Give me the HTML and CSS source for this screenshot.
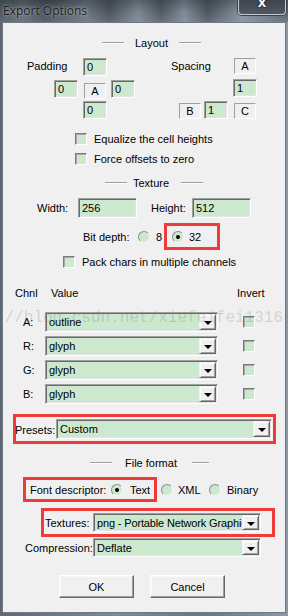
FILE: index.html
```html
<!DOCTYPE html>
<html lang="en">

<head>
    <meta charset="UTF-8">
    <meta name="viewport" content="width=device-width, initial-scale=1.0">
    <title>Export Options</title>
    <link rel="stylesheet" href="styles.css">
</head>

<body>
    <div class="window">
        <div class="titlebar">
            <span class="title">Export Options</span>
            <div class="close">X</div>
        </div>

        <div class="client">
            <!-- Layout -->
            <div class="heading heading-layout">
                <span class="rule"></span><span class="heading-text">Layout</span><span class="rule"></span>
            </div>
            <div class="layout-row">
                <div class="pad-grid">
                    <span class="grid-label">Padding</span>
                    <span class="field p-top">0</span>
                    <span class="field p-left">0</span>
                    <span class="static p-mid">A</span>
                    <span class="field p-right">0</span>
                    <span class="field p-bottom">0</span>
                </div>
                <div class="space-grid">
                    <span class="grid-label">Spacing</span>
                    <span class="static s-a">A</span>
                    <span class="field s-v">1</span>
                    <span class="static s-b">B</span>
                    <span class="field s-h">1</span>
                    <span class="static s-c">C</span>
                </div>
            </div>
            <div class="check-row row-equalize"><span class="check"></span>Equalize the cell heights</div>
            <div class="check-row row-force"><span class="check"></span>Force offsets to zero</div>

            <!-- Texture -->
            <div class="heading heading-texture">
                <span class="rule"></span><span class="heading-text">Texture</span><span class="rule"></span>
            </div>
            <div class="size-row">
                <span class="size-label">Width:</span>
                <span class="field field-wide">256</span>
                <span class="size-label">Height:</span>
                <span class="field field-wide">512</span>
            </div>
            <div class="bit-row">
                <span class="bit-label">Bit depth:</span>
                <span class="radio"></span>
                <span class="bit-eight">8</span>
                <span class="mark mark-bit">
                    <span class="radio checked"></span>
                    <span class="bit-32">32</span>
                </span>
            </div>
            <div class="check-row row-pack"><span class="check"></span>Pack chars in multiple channels</div>

            <div class="chan-head">
                <span class="chan-col">Chnl</span>
                <span class="value-col">Value</span>
                <span>Invert</span>
            </div>
            <div class="chan-row first">
                <span class="chan-label">A:</span>
                <span class="select select-chan">outline<span class="drop"></span></span>
                <span class="check"></span>
            </div>
            <div class="chan-row">
                <span class="chan-label">R:</span>
                <span class="select select-chan">glyph<span class="drop"></span></span>
                <span class="check"></span>
            </div>
            <div class="chan-row">
                <span class="chan-label">G:</span>
                <span class="select select-chan">glyph<span class="drop"></span></span>
                <span class="check"></span>
            </div>
            <div class="chan-row">
                <span class="chan-label">B:</span>
                <span class="select select-chan">glyph<span class="drop"></span></span>
                <span class="check"></span>
            </div>

            <div class="mark mark-presets">
                <span class="presets-label">Presets:</span>
                <span class="select select-presets">Custom<span class="drop"></span></span>
            </div>

            <!-- File format -->
            <div class="heading heading-file">
                <span class="rule"></span><span class="heading-text">File format</span><span class="rule rule-short"></span>
            </div>
            <div class="desc-row">
                <span class="mark mark-desc">
                    <span class="desc-label">Font descriptor:</span>
                    <span class="radio checked"></span>
                    <span class="opt-text">Text</span>
                </span>
                <span class="radio radio-xml"></span>
                <span class="opt-xml">XML</span>
                <span class="radio"></span>
                <span class="opt-bin">Binary</span>
            </div>
            <div class="mark mark-tex">
                <span class="tex-label">Textures:</span>
                <span class="select select-file select-png">png - Portable Network Graphics<span class="drop"></span></span>
            </div>
            <div class="comp-row">
                <span class="comp-label">Compression:</span>
                <span class="select select-file">Deflate<span class="drop"></span></span>
            </div>

            <div class="button-row">
                <span class="btn">OK</span>
                <span class="btn">Cancel</span>
            </div>

            <div class="watermark">://blog.csdn.net/xiefeifei1316</div>
        </div>
    </div>
</body>

</html>
```

FILE: styles.css
```css
* {
    margin: 0;
    padding: 0;
    box-sizing: border-box;
}

body {
    font-family: "Liberation Sans", Arial, sans-serif;
    font-size: 11px;
    color: #000;
    background: #6c7782;
}

.window {
    width: 288px;
    height: 616px;
    padding: 0 2px 3px 2px;
    background: linear-gradient(90deg, #5d6872 0%, #7d8994 40%, #6a7681 70%, #8c98a4 100%);
    overflow: hidden;
}

/* title bar */
.titlebar {
    position: relative;
    height: 22px;
    margin: 0 -2px;
    background:
        linear-gradient(180deg, rgba(30, 36, 42, 0.35) 0%, rgba(0, 0, 0, 0) 55%, rgba(160, 172, 184, 0.25) 100%),
        linear-gradient(90deg, #4a535c 0%, #5e6872 8%, #434b53 16%, #6a747e 30%, #4c545c 38%, #7c8792 48%, #515a63 56%, #7f8a96 64%, #4d565f 72%, #8793a0 84%, #5b6570 100%);
}

.title {
    position: absolute;
    left: 3px;
    top: 2px;
    font-family: "Open Sans", "Liberation Sans", sans-serif;
    font-size: 12px;
    color: #161a1e;
    text-shadow: 0 0 5px rgba(255, 255, 255, 0.55), 0 0 2px rgba(255, 255, 255, 0.4);
}

.close {
    position: absolute;
    left: 238px;
    top: -1px;
    width: 48px;
    height: 16px;
    border: 1px solid #c4cad0;
    border-top: none;
    border-radius: 0 0 4px 4px;
    background: linear-gradient(180deg, #3b434b, #505963);
    box-shadow: 0 0 0 1px #3a4148;
    color: #fff;
    font-family: "DejaVu Sans", sans-serif;
    font-size: 11px;
    font-weight: bold;
    line-height: 10px;
    text-align: center;
    text-shadow: 0 0 2px #000;
}

/* dialog body */
.client {
    position: relative;
    height: 591px;
    background: #f0f0f0;
    border: 1px solid #6e7983;
}

.heading {
    display: flex;
    align-items: center;
    height: 14px;
}

.rule {
    width: 22px;
    height: 2px;
    border-top: 1px solid #a0a0a0;
    border-bottom: 1px solid #fff;
}

.rule-short {
    width: 17px;
}

.heading-layout {
    margin-top: 13px;
    padding-left: 99px;
}

.heading-layout .heading-text {
    margin: 0 11px;
}

.heading-texture {
    margin-top: 11px;
    padding-left: 102px;
}

.heading-texture .heading-text {
    margin: 0 12px 0 6px;
}

.heading-file {
    margin-top: 12px;
    padding-left: 87px;
}

.heading-file .heading-text {
    margin: 0 15px 0 13px;
}

/* input look */
.field {
    display: flex;
    align-items: center;
    width: 24px;
    height: 18px;
    padding-left: 3px;
    background: #cce8cf;
    border: 1px solid;
    border-color: #a0a0a0 #fff #fff #a0a0a0;
    box-shadow: inset 1px 1px 0 #696969, inset -1px -1px 0 #e3e3e3;
}

.field-wide {
    width: 59px;
    height: 20px;
}

.static {
    display: flex;
    align-items: center;
    justify-content: center;
    width: 22px;
    height: 16px;
    border: 1px solid;
    border-color: #a0a0a0 #fff #fff #a0a0a0;
}

.layout-row {
    display: flex;
    margin-top: 8px;
    padding-left: 24px;
    gap: 36px;
}

.pad-grid,
.space-grid {
    display: grid;
    grid-template-rows: 22px 21px 18px;
}

.pad-grid {
    grid-template-columns: 27px 29px 28px 24px;
}

.space-grid {
    grid-template-columns: 8px 25px 29px 24px;
}

.grid-label {
    grid-row: 1;
    grid-column: 1 / 4;
    margin-top: 2px;
}

.p-top { grid-area: 1 / 3; }
.p-left { grid-area: 2 / 2; }
.p-mid { grid-area: 2 / 3; align-self: center; margin-left: 1px; }
.p-right { grid-area: 2 / 4; }
.p-bottom { grid-area: 3 / 3; }

.s-a { grid-area: 1 / 4; margin-left: 1px; }
.s-v { grid-area: 2 / 4; margin-top: -1px; }
.s-b { grid-area: 3 / 2; align-self: end; }
.s-h { grid-area: 3 / 3; }
.s-c { grid-area: 3 / 4; align-self: end; margin-left: 1px; }

/* checkbox + radio */
.check {
    display: inline-block;
    width: 12px;
    height: 12px;
    flex: none;
    background: #cce8cf;
    border: 1px solid;
    border-color: #7a7a7a #fff #fff #7a7a7a;
    box-shadow: inset 1px 1px 0 #a8a8a8;
}

.check-row {
    display: flex;
    align-items: center;
    height: 12px;
    gap: 7px;
}

.row-equalize {
    margin-top: 14px;
    padding-left: 72px;
}

.row-force {
    margin-top: 8px;
    padding-left: 72px;
}

.row-pack {
    margin-top: 6px;
    padding-left: 60px;
}

.radio {
    position: relative;
    display: inline-block;
    width: 12px;
    height: 12px;
    flex: none;
    border-radius: 50%;
    background: #cce8cf;
    border: 1px solid;
    border-color: #8c8c8c #f4f4f4 #f4f4f4 #8c8c8c;
}

.radio.checked::after {
    content: "";
    position: absolute;
    left: 3px;
    top: 3px;
    width: 4px;
    height: 4px;
    border-radius: 50%;
    background: #000;
}

/* red marks from the screenshot */
.mark {
    display: flex;
    align-items: center;
    border: 3px solid #f03b3b;
}

.size-row {
    display: flex;
    align-items: center;
    margin-top: 8px;
    padding-left: 34px;
}

.size-label {
    width: 41px;
}

.size-label + .field + .size-label {
    margin-left: 14px;
}

.bit-row {
    display: flex;
    align-items: center;
    height: 27px;
    margin-top: 5px;
    padding-left: 80px;
}

.bit-label {
    width: 55px;
}

.bit-eight {
    padding-left: 6px;
    box-sizing: content-box;
    width: 8px;
}

.mark-bit {
    width: 56px;
    height: 27px;
    padding-left: 5px;
    gap: 5px;
}

.chan-head {
    display: flex;
    align-items: center;
    height: 14px;
    margin-top: 18px;
    padding-left: 12px;
}

.chan-col {
    width: 36px;
}

.value-col {
    width: 186px;
}

.chan-row {
    display: flex;
    align-items: center;
    height: 20px;
    margin-top: 4px;
    padding-left: 20px;
}

.chan-row.first {
    margin-top: 12px;
}

.chan-label {
    width: 22px;
}

.chan-row .check {
    margin-left: 25px;
}

/* combo boxes */
.select {
    position: relative;
    display: flex;
    align-items: center;
    height: 20px;
    padding-left: 3px;
    white-space: nowrap;
    overflow: hidden;
    background: #cce8cf;
    border: 1px solid;
    border-color: #a0a0a0 #fff #fff #a0a0a0;
    box-shadow: inset 1px 1px 0 #696969, inset -1px -1px 0 #e3e3e3;
}

.select-chan {
    width: 173px;
}

.drop {
    position: absolute;
    right: 1px;
    top: 1px;
    bottom: 1px;
    width: 17px;
    background: #f0f0f0;
    border: 1px solid;
    border-color: #f0f0f0 #696969 #696969 #f0f0f0;
    box-shadow: inset 1px 1px 0 #fff, inset -1px -1px 0 #a0a0a0;
}

.drop::after {
    content: "";
    position: absolute;
    left: 4px;
    top: 6px;
    border-left: 4px solid transparent;
    border-right: 4px solid transparent;
    border-top: 4px solid #000;
}

.mark-presets {
    width: 263px;
    height: 30px;
    margin-top: 10px;
    margin-left: 10px;
}

.presets-label {
    width: 40px;
    margin-left: -1px;
    padding-top: 2px;
}

.select-presets {
    width: 216px;
    margin-left: 1px;
}

.desc-row {
    display: flex;
    align-items: center;
    margin-top: 7px;
    padding-left: 20px;
}

.mark-desc {
    width: 134px;
    height: 25px;
    padding-left: 4px;
}

.desc-label {
    width: 81px;
}

.opt-text {
    margin-left: 7px;
}

.radio-xml {
    margin-left: 4px;
}

.opt-xml {
    width: 36px;
    padding-left: 5px;
}

.opt-bin {
    margin-left: 6px;
}

.mark-tex {
    width: 234px;
    height: 29px;
    margin-top: 6px;
    margin-left: 38px;
    padding-left: 1px;
}

.tex-label {
    width: 48px;
}

.select-file {
    width: 168px;
    height: 19px;
}

.select-png {
    letter-spacing: -0.15px;
}

.comp-row {
    display: flex;
    align-items: center;
    margin-top: 1px;
    padding-left: 22px;
}

.comp-label {
    width: 68px;
}

.button-row {
    display: flex;
    gap: 16px;
    margin-top: 18px;
    padding-left: 56px;
}

.btn {
    display: flex;
    align-items: center;
    justify-content: center;
    width: 75px;
    height: 23px;
    background: #f0f0f0;
    border: 1px solid;
    border-color: #fff #696969 #696969 #fff;
    box-shadow: inset -1px -1px 0 #a0a0a0, inset 1px 1px 0 #f8f8f8;
}

.watermark {
    position: absolute;
    left: -8px;
    top: 286px;
    font-family: "Liberation Mono", "Courier New", monospace;
    font-size: 16px;
    color: rgba(110, 110, 110, 0.24);
    white-space: nowrap;
    pointer-events: none;
}
```
